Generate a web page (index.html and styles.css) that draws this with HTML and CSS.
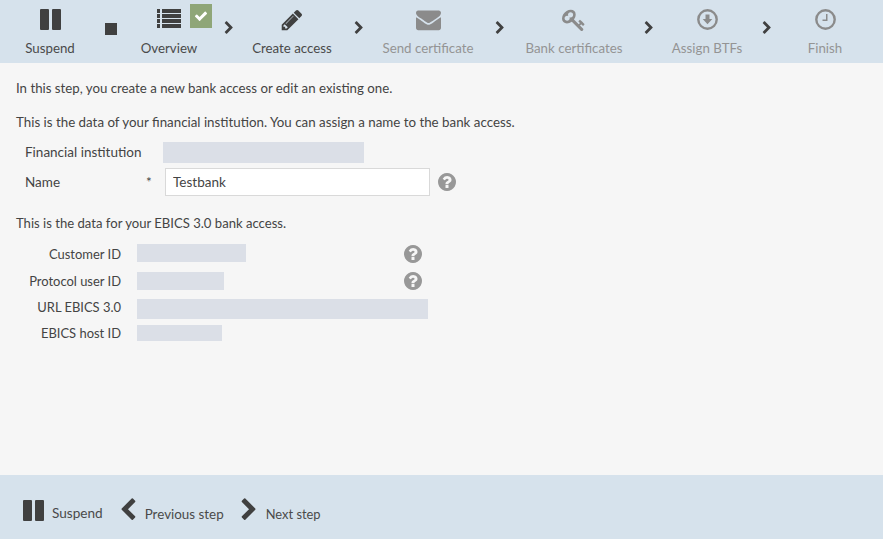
FILE: index.html
```html
<!DOCTYPE html>
<html lang="en">
<head>
<meta charset="utf-8">
<title>Create access</title>
<link rel="stylesheet" href="styles.css">
</head>
<body>
<svg class="defs" width="0" height="0" aria-hidden="true">
  <defs>
    <symbol id="chev-r" viewBox="0 0 1792 1792"><path d="M1363 877l-742 742q-19 19-45 19t-45-19l-166-166q-19-19-19-45t19-45l531-531-531-531q-19-19-19-45t19-45l166-166q19-19 45-19t45 19l742 742q19 19 19 45t-19 45z"/></symbol>
    <symbol id="chev-l" viewBox="0 0 1792 1792"><path d="M1427 301l-531 531 531 531q19 19 19 45t-19 45l-166 166q-19 19-45 19t-45-19l-742-742q-19-19-19-45t19-45l742-742q19-19 45-19t45 19l166 166q19 19 19 45t-19 45z"/></symbol>
    <symbol id="help" viewBox="0 0 1536 1536"><path transform="translate(-128 -128)" d="M1024 1376v-192q0-14-9-23t-23-9h-192q-14 0-23 9t-9 23v192q0 14 9 23t23 9h192q14 0 23-9t9-23zm256-672q0-88-55.5-163t-138.5-116-170-41q-243 0-371 213-15 24 8 42l132 100q7 6 19 6 16 0 25-12 53-68 86-92 34-24 86-24 48 0 85.5 26t37.5 59q0 38-20 61t-68 45q-63 28-115.5 86.5t-52.5 125.5v36q0 14 9 23t23 9h192q14 0 23-9t9-23q0-19 21.5-49.5t54.5-49.5q32-18 49-28.5t46-35 44.5-48 28-60.5 12.5-81zm384 192q0 209-103 385.5t-279.5 279.5-385.5 103-385.5-103-279.5-279.5-103-385.5 103-385.5 279.5-279.5 385.5-103 385.5 103 279.5 279.5 103 385.5z"/></symbol>
    <symbol id="pause" viewBox="0 0 21 21"><rect x="0" y="0" width="9" height="21" rx="1"/><rect x="12" y="0" width="9" height="21" rx="1"/></symbol>
  </defs>
</svg>

<header class="wizard">
  <div class="step step-suspend">
    <svg class="ico" width="21" height="21"><use href="#pause"/></svg>
    <span class="step-label">Suspend</span>
  </div>
  <div class="stop-cell"><span class="stop"></span></div>
  <div class="step step-overview">
    <svg class="ico" width="24" height="21" viewBox="0 0 24 21">
      <rect x="0" y="0" width="3" height="4"/><rect x="5" y="0" width="19" height="4"/>
      <rect x="0" y="5" width="3" height="4"/><rect x="5" y="5" width="19" height="4"/>
      <rect x="0" y="10" width="3" height="4"/><rect x="5" y="10" width="19" height="4"/>
      <rect x="0" y="15" width="3" height="4"/><rect x="5" y="15" width="19" height="4"/>
    </svg>
    <span class="badge"><svg width="14" height="14" viewBox="0 0 1792 1792"><path d="M1671 566q0 40-28 68l-724 724-136 136q-28 28-68 28t-68-28l-136-136-362-362q-28-28-28-68t28-68l136-136q28-28 68-28t68 28l294 295 656-657q28-28 68-28t68 28l136 136q28 28 28 68z"/></svg></span>
    <span class="step-label">Overview</span>
  </div>
  <div class="sep"><svg width="14" height="14"><use href="#chev-r"/></svg></div>
  <div class="step step-create">
    <svg class="ico" width="24" height="24" viewBox="0 0 1792 1792"><path d="M491 1536l91-91-235-235-91 91v107h128v128h107zm523-928q0-22-22-22-10 0-17 7l-542 542q-7 7-7 17 0 22 22 22 10 0 17-7l542-542q7-7 7-17zm-54-192l416 416-832 832h-416v-416zm683 96q0 53-37 90l-166 166-416-416 166-165q36-38 90-38 53 0 91 38l235 234q37 39 37 91z"/></svg>
    <span class="step-label">Create access</span>
  </div>
  <div class="sep"><svg width="14" height="14"><use href="#chev-r"/></svg></div>
  <div class="step step-send off">
    <svg class="ico" width="25" height="25" viewBox="0 0 1792 1792"><path d="M1792 710v794q0 66-47 113t-113 47h-1472q-66 0-113-47t-47-113v-794q44 49 101 87 362 246 497 345 57 42 92.5 65.5t94.5 48 110 24.5h2q51 0 110-24.5t94.5-48 92.5-65.5q170-123 498-345 57-39 100-87zm0-294q0 79-49 151t-122 123q-376 261-468 325-10 7-42.5 30.5t-54 38-52 32.5-57.5 27-50 9h-2q-23 0-50-9t-57.5-27-52-32.5-54-38-42.5-30.5q-91-64-262-182.5t-205-142.5q-62-42-117-115.5t-55-136.5q0-78 41.5-130t118.5-52h1472q65 0 112.5 47t47.5 113z"/></svg>
    <span class="step-label">Send certificate</span>
  </div>
  <div class="sep"><svg width="14" height="14"><use href="#chev-r"/></svg></div>
  <div class="step step-bank off">
    <svg class="ico" width="24" height="24" viewBox="0 0 1792 1792"><path d="M832 512q0-80-56-136t-136-56-136 56-56 136q0 42 19 83-41-19-83-19-80 0-136 56t-56 136 56 136 136 56 136-56 56-136q0-42-19-83 41 19 83 19 80 0 136-56t56-136zm851 704q0 17-49 66t-66 49q-9 0-28.5-16t-36.5-33-38.5-40-24.5-26l-96 96 220 220q28 28 28 68 0 42-39 81t-81 39q-40 0-68-28l-671-671q-176 131-365 131-163 0-265.5-102.5t-102.5-265.5q0-160 95-313t248-248 313-95q163 0 265.5 102.5t102.5 265.5q0 189-131 365l355 355 96-96q-3-3-26-24.5t-40-38.5-33-36.5-16-28.5q0-17 49-66t66-49q13 0 23 10 6 6 46 44.5t82 79.5 86.5 86 73 78 28.5 41z"/></svg>
    <span class="step-label">Bank certificates</span>
  </div>
  <div class="sep"><svg width="14" height="14"><use href="#chev-r"/></svg></div>
  <div class="step step-assign off">
    <svg class="ico" width="21" height="21" viewBox="0 0 21 21">
      <circle cx="10.500" cy="10.500" r="9.200" fill="none" stroke="currentColor" stroke-width="2.400"/>
      <path d="M8.500 5.500h4v4.500h2.800l-4.800 5.200-4.800-5.200h2.800z"/>
    </svg>
    <span class="step-label">Assign BTFs</span>
  </div>
  <div class="sep"><svg width="14" height="14"><use href="#chev-r"/></svg></div>
  <div class="step step-finish off">
    <svg class="ico" width="21" height="21" viewBox="0 0 21 21">
      <circle cx="10.500" cy="10.500" r="9.200" fill="none" stroke="currentColor" stroke-width="2.400"/>
      <path d="M11 5h1.500v7H7.500v-1.500H11z"/>
    </svg>
    <span class="step-label">Finish</span>
  </div>
</header>

<main class="content">
  <p class="intro">In this step, you create a new bank access or edit an existing one.</p>
  <p class="lead">This is the data of your financial institution. You can assign a name to the bank access.</p>
  <div class="form-bank">
    <span class="f-label f-label-top">Financial institution</span>
    <span class="f-star"></span>
    <span class="bar bar-inst"></span>
    <span></span>
    <span class="f-label">Name</span>
    <span class="f-star">*</span>
    <input class="text-input" type="text" value="Testbank">
    <svg class="help" width="18" height="18"><use href="#help"/></svg>
  </div>
  <p class="lead-2">This is the data for your EBICS 3.0 bank access.</p>
  <div class="form-ebics">
    <div class="e-row e-row-cust">
      <span class="e-label">Customer ID</span>
      <span class="bar bar-cust"></span>
      <svg class="help help-e" width="18" height="18"><use href="#help"/></svg>
    </div>
    <div class="e-row e-row-proto">
      <span class="e-label">Protocol user ID</span>
      <span class="bar bar-proto"></span>
      <svg class="help help-e" width="18" height="18"><use href="#help"/></svg>
    </div>
    <div class="e-row e-row-url">
      <span class="e-label">URL EBICS 3.0</span>
      <span class="bar bar-url"></span>
    </div>
    <div class="e-row e-row-host">
      <span class="e-label">EBICS host ID</span>
      <span class="bar bar-host"></span>
    </div>
  </div>
</main>

<footer class="actions">
  <div class="action action-suspend"><svg width="21" height="21"><use href="#pause"/></svg><span>Suspend</span></div>
  <div class="action action-prev"><svg width="24" height="24"><use href="#chev-l"/></svg><span>Previous step</span></div>
  <div class="action action-next"><svg width="24" height="24"><use href="#chev-r"/></svg><span>Next step</span></div>
</footer>
</body>
</html>
```
FILE: styles.css
```css
* { box-sizing: border-box; }
html, body { height: 100%; }
body {
  margin: 0;
  display: flex;
  flex-direction: column;
  overflow: hidden;
  background: #f6f6f6;
  color: #444;
  font-family: "Lato", sans-serif;
  font-size: 13.5px;
  line-height: 18px;
}
.defs { position: absolute; }
svg { fill: currentColor; display: block; }

.wizard {
  height: 63px;
  flex: none;
  display: grid;
  grid-template-columns: 100px 30px 78px 42px 84px 50px 88px 56px 92px 58px 58px 62px 54px;
  background: #d6e2ec;
  color: #404040;
  font-size: 13.3px;
}
.step {
  position: relative;
  display: flex;
  flex-direction: column;
  align-items: center;
  padding-top: 9px;
}
.ico { height: 21px; flex: none; overflow: visible; }
.step-create .ico, .step-bank .ico { margin-top: -1px; margin-bottom: -2px; height: 24px; }
.step-send .ico { margin-top: -2px; margin-bottom: -2px; height: 25px; }
.step-label { margin-top: 9px; white-space: nowrap; color: #4a4a4a; }
.off { color: #8b8b8b; }
.off .step-label { color: #949494; }
.stop-cell { padding: 23px 0 0 5px; }
.stop { display: block; width: 12px; height: 12px; background: #404040; }
.badge {
  position: absolute;
  left: 60px;
  top: 4px;
  width: 22px;
  height: 24px;
  background: #8fa678;
  color: #fff;
  display: flex;
  align-items: center;
  justify-content: center;
}
.sep { display: flex; justify-content: center; padding-top: 21px; }

.content { flex: 1; padding: 16px 0 0 16px; }
.content p { margin: 0; }
.content .intro { font-size: 13.25px; }
.content .lead { margin-top: 16px; font-size: 13.34px; }
.content .lead-2 { margin-top: 18px; font-size: 13.1px; }

.form-bank {
  margin: 11px 0 0 9px;
  display: grid;
  grid-template-columns: 120px 18px auto auto;
  grid-template-rows: 21px 28px;
  row-gap: 5px;
  justify-content: start;
  align-items: center;
}
.f-label-top { margin-bottom: 2px; }
.f-star { padding-left: 1px; }
.bar { display: block; background: #dbdfe7; flex: none; }
.bar-inst { width: 201px; height: 21px; }
.text-input {
  margin-left: 2px;
  width: 265px;
  height: 28px;
  padding: 0 7px;
  border: 1px solid #d9d9d9;
  background: #fff;
  color: #444;
  font: inherit;
  outline: none;
}
.help { color: #989898; flex: none; }
.form-bank .help { margin-left: 8px; }

.form-ebics {
  margin: 12px 0 0 -16px;
  display: flex;
  flex-direction: column;
  font-size: 12.95px;
}
.e-row { display: flex; align-items: center; }
.e-label { width: 121px; margin-right: 16px; flex: none; text-align: right; white-space: nowrap; }
.e-row-cust { height: 18px; }
.e-row-proto { height: 18px; margin-top: 10px; }
.e-row-url { height: 20px; margin-top: 9px; }
.e-row-host { height: 16px; margin-top: 6px; }
.e-row-cust .e-label { margin-top: 2px; }
.e-row-url .e-label { margin-bottom: 4px; }
.bar-cust { width: 109px; height: 18px; }
.bar-proto { width: 87px; height: 18px; }
.bar-url { width: 291px; height: 20px; }
.bar-host { width: 85px; height: 16px; }
.e-row-cust .help-e { margin: 2px 0 0 158px; }
.e-row-proto .help-e { margin-left: 180px; }

.actions {
  height: 64px;
  flex: none;
  background: #d6e2ec;
  padding: 6px 0 0 23px;
  display: flex;
  align-items: center;
  color: #404040;
}
.action { display: flex; align-items: flex-end; }
.action span { color: #4a4a4a; line-height: 18px; margin-bottom: -1px; }
.action-suspend { gap: 8px; font-size: 13.6px; }
.action-prev { margin-left: 13px; gap: 5px; font-size: 13.4px; }
.action-next { margin-left: 13px; gap: 5px; font-size: 12.9px; }
```
